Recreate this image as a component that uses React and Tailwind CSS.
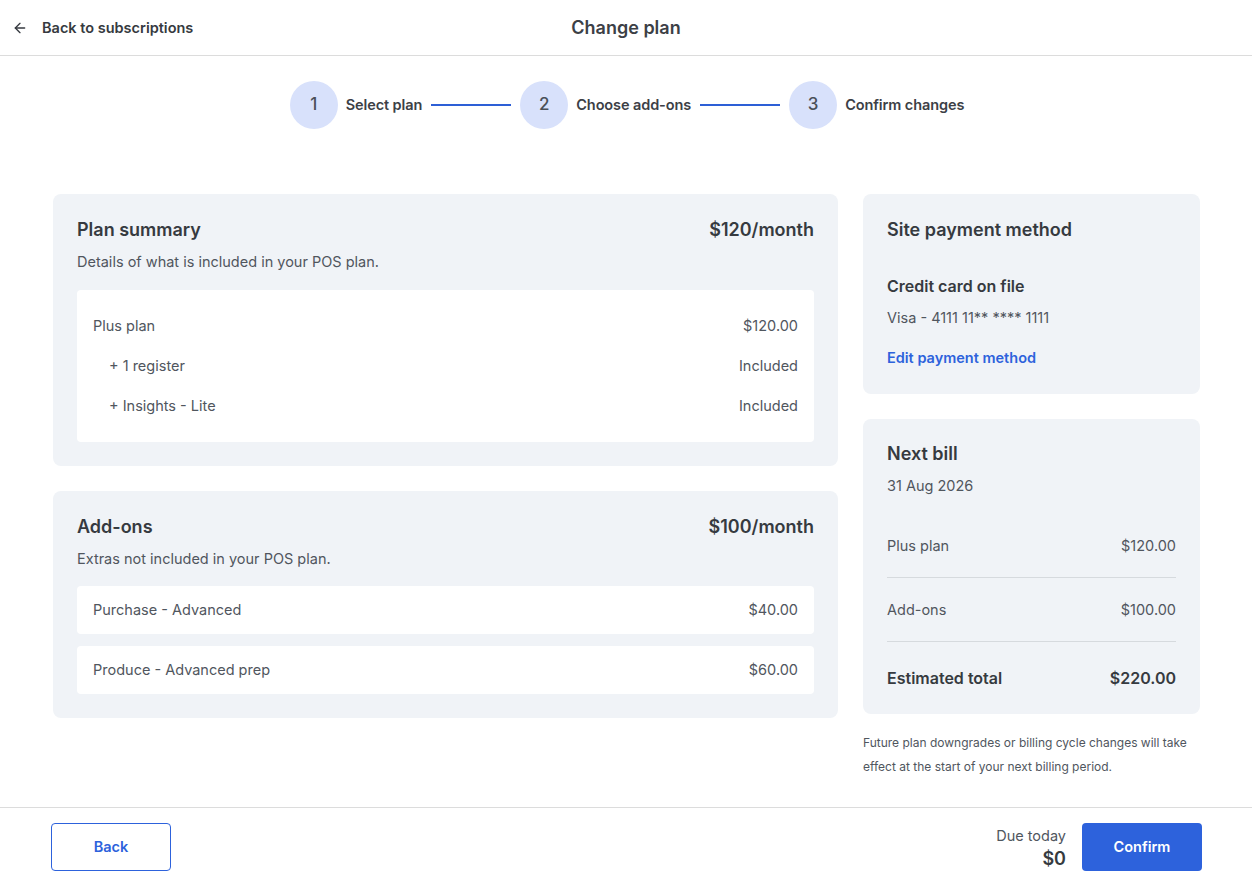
import React from "react";
import { ArrowLeft } from "lucide-react";

const font = { fontFamily: "Inter, 'Noto Sans', sans-serif" };

function Step({ n, label, last }) {
  return (
    <div className="flex items-center gap-2">
      <div className="w-12 h-12 rounded-full bg-[#d8e1fb] flex items-center justify-center text-[17px] font-medium text-[#4a5058]">
        {n}
      </div>
      <span className="text-[14.5px] font-semibold text-[#3c4046] tracking-[-0.1px]">{label}</span>
      {!last && <div className="w-20 h-[2px] bg-[#2d5fd6] ml-[1px] mr-[1px]" />}
    </div>
  );
}

function Card({ title, price, subtitle, children, className = "" }) {
  return (
    <div className={`rounded-lg bg-[#f0f3f7] p-6 ${className}`}>
      <div className="flex items-center justify-between h-[22px]">
        <h2 className="text-[18px] font-semibold text-[#363a40]">{title}</h2>
        {price && <span className="text-[18px] font-semibold text-[#363a40]">{price}</span>}
      </div>
      {subtitle && <p className="mt-[21px] text-[14.5px] leading-[22px] text-[#50565e] -translate-y-[10px]">{subtitle}</p>}
      {children}
    </div>
  );
}

export default function App() {
  return (
    <div className="min-h-screen flex flex-col bg-white text-[#363a40]" style={font}>
      <header className="h-14 border-b border-[#dcdcdc] flex items-center relative px-3">
        <button className="flex items-center gap-[14px] text-[14.5px] font-semibold text-[#363a40]">
          <ArrowLeft size={16} strokeWidth={2} />
          Back to subscriptions
        </button>
        <h1 className="absolute left-1/2 -translate-x-1/2 text-[18px] font-semibold text-[#3c4046]">Change plan</h1>
      </header>

      <div className="flex-1">
        <div className="mt-[25px] flex justify-center items-center gap-2 pl-[2px]">
          <Step n="1" label="Select plan" />
          <Step n="2" label="Choose add-ons" />
          <Step n="3" label="Confirm changes" last />
        </div>

        <div className="mt-[65px] px-[53px] pr-[52px] flex gap-[25px] items-start">
          <div className="flex-1 flex flex-col gap-[25px]">
            <Card title="Plan summary" price="$120/month" subtitle="Details of what is included in your POS plan.">
              <div className="bg-white rounded mt-[7px] px-4 py-4 text-[14.5px] text-[#50565e]">
                <div className="h-10 flex items-center justify-between">
                  <span>Plus plan</span><span>$120.00</span>
                </div>
                <div className="h-10 flex items-center justify-between">
                  <span className="pl-4">+ 1 register</span><span>Included</span>
                </div>
                <div className="h-10 flex items-center justify-between">
                  <span className="pl-4">+ Insights - Lite</span><span>Included</span>
                </div>
              </div>
            </Card>
            <Card title="Add-ons" price="$100/month" subtitle="Extras not included in your POS plan.">
              <div className="mt-[6px] flex flex-col gap-3 text-[14.5px] text-[#50565e]">
                <div className="bg-white rounded h-12 px-4 flex items-center justify-between">
                  <span>Purchase - Advanced</span><span>$40.00</span>
                </div>
                <div className="bg-white rounded h-12 px-4 flex items-center justify-between">
                  <span>Produce - Advanced prep</span><span>$60.00</span>
                </div>
              </div>
            </Card>
          </div>

          <div className="w-[337px] flex flex-col">
            <div className="rounded-lg bg-[#f0f3f7] px-6 pt-[25px] pb-[25px]">
              <h2 className="text-[18px] font-semibold leading-[22px] text-[#363a40]">Site payment method</h2>
              <div className="mt-[34px] text-[16px] font-semibold leading-[22px] text-[#363a40]">Credit card on file</div>
              <div className="mt-[10px] text-[14.5px] leading-[22px] text-[#50565e]">Visa - 4111 11** **** 1111</div>
              <a className="block mt-[18px] text-[14.5px] font-semibold leading-[22px] text-[#2d62dc]" href="#">Edit payment method</a>
            </div>

            <div className="mt-[25px] rounded-lg bg-[#f0f3f7] px-6 pt-[24px]">
              <h2 className="text-[18px] font-semibold leading-[22px] text-[#363a40]">Next bill</h2>
              <div className="mt-[10px] text-[14.5px] leading-[22px] text-[#50565e]">31 Aug 2026</div>
              <div className="mt-[17px] text-[14.5px] text-[#50565e]">
                <div className="h-[64px] flex items-center justify-between border-b border-[#d6dade]">
                  <span>Plus plan</span><span>$120.00</span>
                </div>
                <div className="h-[64px] flex items-center justify-between border-b border-[#d6dade]">
                  <span>Add-ons</span><span>$100.00</span>
                </div>
                <div className="h-[72px] flex items-center justify-between text-[16px] font-semibold text-[#363a40]">
                  <span>Estimated total</span><span>$220.00</span>
                </div>
              </div>
            </div>

            <p className="mt-[17px] text-[12px] leading-[24px] text-[#50565e]">
              Future plan downgrades or billing cycle changes will take effect at the start of your next billing period.
            </p>
          </div>
        </div>
      </div>

      <footer className="h-[78px] border-t border-[#dcdcdc] flex items-center justify-between pl-[51px] pr-[50px]">
        <button className="w-[120px] h-12 rounded border border-[#2d62dc] text-[#2d62dc] text-[14.5px] font-semibold">
          Back
        </button>
        <div className="flex items-center gap-4">
          <div className="text-right leading-[23px]">
            <div className="text-[14.5px] text-[#50565e]">Due today</div>
            <div className="text-[18px] font-semibold text-[#363a40]">$0</div>
          </div>
          <button className="w-[120px] h-12 rounded bg-[#2d62dc] text-white text-[14.5px] font-semibold">
            Confirm
          </button>
        </div>
      </footer>
    </div>
  );
}
